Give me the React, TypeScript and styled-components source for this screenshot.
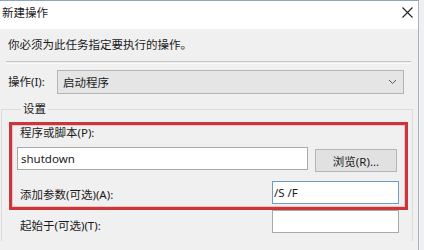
import React from 'react';
import styled, { createGlobalStyle } from 'styled-components';

const GlobalStyle = createGlobalStyle`
  html, body {
    margin: 0;
    padding: 0;
    background: #f0f0f0;
  }
  body {
    font-family: 'Noto Sans', 'Noto Sans CJK SC', sans-serif;
    font-size: 11.5px;
    color: #1a1a1a;
  }
`;

const Window = styled.div`
  width: 419px;
  height: 250px;
  border-top: 1px solid #8ea6bd;
  border-right: 1px solid #9fb6cc;
  background: #f0f0f0;
  overflow: hidden;
  box-sizing: border-box;
`;

const TitleBar = styled.div`
  height: 28px;
  background: #fff;
  display: flex;
  align-items: center;
  justify-content: space-between;
  padding: 0 5px 0 2px;
`;

const Title = styled.span`
  line-height: 16px;
  padding-bottom: 4px;
`;

const CloseIcon = () => (
  <svg width="11" height="11" viewBox="0 0 11 11" style={{ marginBottom: 5 }}>
    <path d="M0.5 0.5 L10.5 10.5 M10.5 0.5 L0.5 10.5" stroke="#222" strokeWidth="1.1" fill="none" />
  </svg>
);

const Body = styled.div`
  display: flex;
  flex-direction: column;
`;

const Instruction = styled.div`
  margin: 8px 0 0 8px;
  line-height: 16px;
`;

const Separator = styled.div`
  margin: 8px 0 0 6px;
  width: 405px;
  height: 1px;
  border-top: 1px solid #c4c4c4;
  border-bottom: 1px solid #fafafa;
`;

const FieldRow = styled.div<{ $labelWidth?: number; $pad?: number }>`
  display: grid;
  grid-template-columns: ${(p) => p.$labelWidth || 49}px auto;
  align-items: center;
  padding-left: ${(p) => p.$pad || 0}px;
`;

const Label = styled.span<{ $shift?: number }>`
  line-height: 16px;
  position: relative;
  top: ${(p) => p.$shift || 0}px;
`;

const ActionRow = styled(FieldRow)`
  margin-top: 6px;
  padding-left: 8px;
`;

const Combo = styled.div`
  width: 347px;
  height: 24px;
  box-sizing: border-box;
  background: #e5e5e5;
  border: 1px solid #b4b4b4;
  display: flex;
  align-items: center;
  justify-content: space-between;
  padding: 0 6px 0 5px;
`;

const Chevron = () => (
  <svg width="9" height="6" viewBox="0 0 9 6">
    <path d="M1 1 L4.5 4.5 L8 1" stroke="#555" strokeWidth="1" fill="none" />
  </svg>
);

const GroupBox = styled.fieldset`
  margin: 7px 0 0 1px;
  padding: 5px 4px 0 7px;
  width: 412px;
  box-sizing: border-box;
  border: 1px solid #dcdcdc;
  border-bottom: none;
  height: 140px;
`;

const Legend = styled.legend`
  margin-left: 12px;
  padding: 0 2px;
  line-height: 16px;
`;

const Highlight = styled.div`
  width: 399px;
  box-sizing: border-box;
  border: 3px solid #c9373c;
  box-shadow: inset 0 0 0 1px #f2c2c2;
  padding: 0 0 3px 0;
  display: flex;
  flex-direction: column;
`;

const ScriptLabel = styled.div`
  padding-left: 8px;
  line-height: 16px;
`;

const ScriptRow = styled.div`
  display: flex;
  align-items: flex-start;
  margin: 6px 0 0 5px;
  gap: 7px;
`;

const TextBox = styled.div<{ $width: number; $focus?: boolean }>`
  width: ${(p) => p.$width}px;
  height: 23px;
  box-sizing: border-box;
  background: #fff;
  border: 1px solid ${(p) => (p.$focus ? '#6f9ec4' : '#a9a9a9')};
  display: flex;
  align-items: center;
  padding-left: ${(p) => (p.$focus ? 1 : 3)}px;
`;

const Button = styled.div`
  width: 82px;
  height: 23px;
  margin-top: 2px;
  box-sizing: border-box;
  background: #e1e1e1;
  border: 1px solid #b5b5b5;
  display: flex;
  align-items: center;
  justify-content: center;
`;

const ArgRow = styled(FieldRow)`
  margin-top: 9px;
`;

export default function App() {
  return (
    <>
      <GlobalStyle />
      <Window>
        <TitleBar>
          <Title>新建操作</Title>
          <CloseIcon />
        </TitleBar>
        <Body>
          <Instruction>你必须为此任务指定要执行的操作。</Instruction>
          <Separator />
          <ActionRow $labelWidth={49}>
            <Label>操作(I):</Label>
            <Combo>
              <span>启动程序</span>
              <Chevron />
            </Combo>
          </ActionRow>
          <GroupBox>
            <Legend>设置</Legend>
            <Highlight>
              <ScriptLabel>程序或脚本(P):</ScriptLabel>
              <ScriptRow>
                <TextBox $width={291}>shutdown</TextBox>
                <Button>浏览(R)...</Button>
              </ScriptRow>
              <ArgRow $labelWidth={252} $pad={8}>
                <Label $shift={2}>添加参数(可选)(A):</Label>
                <TextBox $width={127} $focus>/S /F</TextBox>
              </ArgRow>
            </Highlight>
            <FieldRow $labelWidth={252} $pad={11}>
              <Label $shift={4}>起始于(可选)(T):</Label>
              <TextBox $width={127} />
            </FieldRow>
          </GroupBox>
        </Body>
      </Window>
    </>
  );
}
